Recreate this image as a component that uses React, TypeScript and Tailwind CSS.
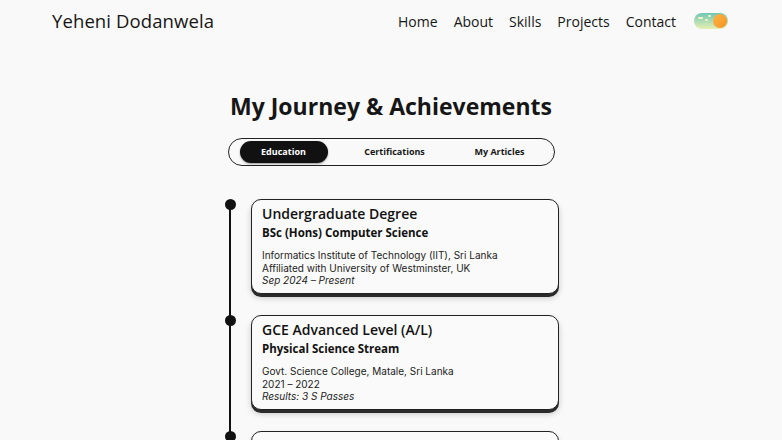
import React from "react";

const heading = { fontFamily: "'Open Sans', 'Liberation Sans', sans-serif" };
const body = { fontFamily: "Inter, 'Liberation Sans', sans-serif" };

function Toggle() {
  return (
    <div className="relative w-[34px] h-[16px] rounded-full overflow-hidden bg-gradient-to-b from-[#6cc7b4] to-[#e6efb0]">
      <div className="absolute left-[4px] top-[4px] w-[5px] h-[2px] rounded-full bg-[#f4f2c8]" />
      <div className="absolute left-[11px] top-[6px] w-[3px] h-[2px] rounded-full bg-[#f4f2c8]" />
      <div className="absolute left-[14px] top-[2px] w-[3px] h-[2px] rounded-full bg-[#f4f2c8]" />
      <div className="absolute right-[1px] top-[1px] w-[14px] h-[14px] rounded-full bg-gradient-to-br from-[#ffb347] to-[#f7931e]" />
    </div>
  );
}

function Card({ title, sub, lines, italic }: { title: string; sub: string; lines: string[]; italic: string }) {
  return (
    <div className="w-[308px] h-[95px] rounded-[10px] border border-[#222] bg-[#fafafa] shadow-[0_3px_0_#2a2a2a,0_4px_6px_rgba(0,0,0,0.2)] px-[10px] pt-[5px]">
      <div style={heading} className="text-[14px] font-semibold text-[#111] leading-[18px]">{title}</div>
      <div style={heading} className="text-[11.5px] font-bold text-[#111] leading-[16px] mt-[2px]">{sub}</div>
      <div style={body} className="mt-[8px] text-[10px] leading-[12.5px] text-[#222]">
        {lines.map((l) => (
          <div key={l}>{l}</div>
        ))}
        <div className="italic">{italic}</div>
      </div>
    </div>
  );
}

export default function App() {
  return (
    <div className="w-[782px] h-[440px] overflow-hidden bg-[#f9f9f9] text-[#161616]">
      <header className="flex items-center justify-between pl-[52px] pr-[54px] h-[42px]">
        <div style={heading} className="text-[18.5px] tracking-[0.1px]">Yeheni Dodanwela</div>
        <nav style={heading} className="flex items-center gap-[16px] text-[14px]">
          <span>Home</span>
          <span>About</span>
          <span>Skills</span>
          <span>Projects</span>
          <span>Contact</span>
          <span className="ml-[2px]"><Toggle /></span>
        </nav>
      </header>
      <main className="flex flex-col items-center">
        <h1 style={heading} className="mt-[49px] text-[23px] font-bold leading-[30px]">My Journey &amp; Achievements</h1>
        <div style={heading} className="mt-[17px] w-[327px] h-[28px] rounded-full border border-[#222] flex items-center px-[11px] text-[9px] font-bold">
          <div className="w-[88px] h-[22px] rounded-full bg-[#111] text-white flex items-center justify-center shadow-[0_1px_2px_rgba(0,0,0,0.4)]">Education</div>
          <div className="w-[134px] text-center">Certifications</div>
          <div className="w-[76px] text-center">My Articles</div>
        </div>
        <div className="relative mt-[33px] ml-[5px] flex flex-col gap-[21px] pl-[23px]">
          <div className="absolute left-[1px] top-[1px] bottom-[-40px] w-[2px] bg-[#111]" />
          {[0, 1, 2].map((i) => (
            <div key={i} className="absolute left-[-3px] w-[11px] h-[11px] rounded-full bg-[#111]" style={{ top: i * 116 }} />
          ))}
          <Card
            title="Undergraduate Degree"
            sub="BSc (Hons) Computer Science"
            lines={["Informatics Institute of Technology (IIT), Sri Lanka", "Affiliated with University of Westminster, UK"]}
            italic="Sep 2024 – Present"
          />
          <Card
            title="GCE Advanced Level (A/L)"
            sub="Physical Science Stream"
            lines={["Govt. Science College, Matale, Sri Lanka", "2021 – 2022"]}
            italic="Results: 3 S Passes"
          />
          <Card
            title="GCE Ordinary Level (O/L)"
            sub="Govt. Science College"
            lines={["Matale, Sri Lanka", "2020"]}
            italic="Results: 9 A Passes"
          />
        </div>
      </main>
    </div>
  );
}
